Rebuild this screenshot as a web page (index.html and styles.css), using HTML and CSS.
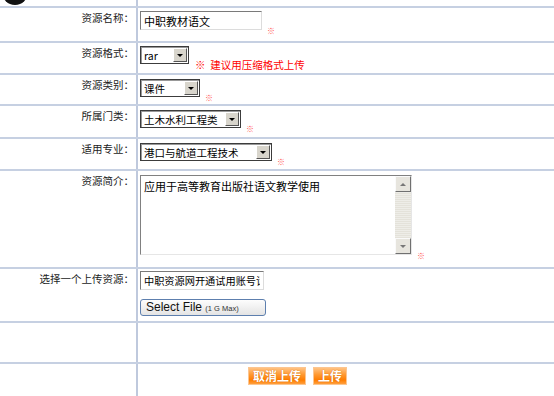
FILE: index.html
```html
<!DOCTYPE html>
<html lang="zh-CN">
<head>
  <meta charset="UTF-8">
  <title>上传资源</title>
  <link rel="stylesheet" href="styles.css">
</head>
<body>
  <div class="form">
    <div class="row row-top">
      <div class="label">
        <svg class="logo" width="40" height="6" viewBox="0 0 40 6"><ellipse cx="15" cy="-8" rx="13" ry="13" fill="#111"/></svg>
      </div>
      <div class="field"></div>
    </div>

    <div class="row row-name">
      <div class="label">资源名称：</div>
      <div class="field">
        <input class="text text-name" type="text" value="中职教材语文">
        <span class="star">※</span>
      </div>
    </div>

    <div class="row row-format">
      <div class="label">资源格式：</div>
      <div class="field">
        <span class="select w-format"><select><option>rar</option></select><span class="select-btn"></span></span>
        <span class="hint">※ &nbsp;建议用压缩格式上传</span>
      </div>
    </div>

    <div class="row row-type">
      <div class="label">资源类别：</div>
      <div class="field low">
        <span class="select w-type"><select><option>课件</option></select><span class="select-btn"></span></span>
        <span class="star">※</span>
      </div>
    </div>

    <div class="row row-cat">
      <div class="label">所属门类：</div>
      <div class="field low">
        <span class="select w-cat"><select><option>土木水利工程类</option></select><span class="select-btn"></span></span>
        <span class="star">※</span>
      </div>
    </div>

    <div class="row row-major">
      <div class="label">适用专业：</div>
      <div class="field low">
        <span class="select w-major"><select><option>港口与航道工程技术</option></select><span class="select-btn"></span></span>
        <span class="star">※</span>
      </div>
    </div>

    <div class="row row-intro">
      <div class="label">资源简介：</div>
      <div class="field low">
        <div class="textbox">
          <textarea>应用于高等教育出版社语文教学使用</textarea>
          <div class="scrollbar">
            <span class="sb-btn sb-up"></span>
            <span class="sb-track"></span>
            <span class="sb-btn sb-down"></span>
          </div>
        </div>
        <span class="star">※</span>
      </div>
    </div>

    <div class="row row-file">
      <div class="label">选择一个上传资源：</div>
      <div class="field column">
        <input class="text text-file" type="text" value="中职资源网开通试用账号请">
        <button class="select-file">Select File <small>(1 G Max)</small></button>
      </div>
    </div>

    <div class="row row-empty">
      <div class="label"></div>
      <div class="field"></div>
    </div>

    <div class="row row-actions">
      <div class="label"></div>
      <div class="field actions">
        <button class="orange-btn">取消上传</button>
        <button class="orange-btn">上传</button>
      </div>
    </div>
  </div>
</body>
</html>
```

FILE: styles.css
```css
* {
  box-sizing: border-box;
}

body {
  margin: 0;
  font-family: "Noto Sans CJK SC", "Liberation Sans", sans-serif;
  font-size: 11px;
  color: #000;
  background: #fff;
  overflow: hidden;
}

.row {
  display: grid;
  grid-template-columns: 138px 1fr;
  border-top: 2px solid #c6d0e2;
}

.row-top {
  border-top: none;
  height: 6px;
}
.row-name   { height: 35px; }
.row-format { height: 32px; }
.row-type   { height: 31px; }
.row-cat    { height: 33px; }
.row-major  { height: 32px; }
.row-intro  { height: 98px; }
.row-file   { height: 54px; }
.row-empty  { height: 41px; }
.row-actions { height: 40px; }

.label {
  border-right: 2px solid #bfc9dd;
  text-align: right;
  padding: 3px 2px 0 0;
  line-height: 13px;
  color: #222;
  font-size: 10.5px;
  overflow: hidden;
}

.row-top .label {
  text-align: left;
  padding: 0;
}

.logo {
  display: block;
}

.field {
  display: flex;
  align-items: flex-end;
  align-self: start;
  padding: 3px 0 0 2px;
}

.field.low {
  padding-top: 4px;
}

.field.column {
  flex-direction: column;
  align-items: flex-start;
  gap: 9px;
  padding-top: 2px;
}

.star {
  color: #f55;
  font-size: 8px;
  line-height: 8px;
  margin: 0 0 -5px 5px;
}

.hint {
  color: #f00;
  font-size: 10.5px;
  line-height: 12px;
  margin: 0 0 -7px 6px;
}

.text {
  font: inherit;
  height: 19px;
  padding: 0 3px;
  border: 1px solid;
  border-color: #7a7a7a #dcdcdc #dcdcdc #7a7a7a;
  background: #fff;
  color: #000;
  outline: none;
}

.text-name { width: 122px; }
.text-file { width: 124px; font-size: 10.2px; }

.select {
  display: inline-flex;
  height: 18px;
  border: 1px solid #3c3c3c;
  box-shadow: inset 1px 1px 0 #999;
  background: #fff;
}

.select select {
  appearance: none;
  -webkit-appearance: none;
  flex: 1;
  min-width: 0;
  border: none;
  background: transparent;
  font: inherit;
  font-size: 10.5px;
  color: #000;
  padding: 0 0 0 3px;
  outline: none;
}

.select-btn {
  width: 14px;
  margin: 1px 1px 1px 0;
  background: #d8d5cc;
  border: 1px solid;
  border-color: #fff #555 #555 #fff;
  display: flex;
  align-items: center;
  justify-content: center;
}

.select-btn::after,
.sb-down::after {
  content: "";
  border-left: 3px solid transparent;
  border-right: 3px solid transparent;
  border-top: 3px solid #000;
}

.w-format { width: 49px; }
.w-type   { width: 60px; }
.w-cat    { width: 101px; }
.w-major  { width: 132px; }

.textbox {
  display: flex;
  width: 272px;
  height: 80px;
  border: 1px solid;
  border-color: #808080 #e6e6e6 #e6e6e6 #808080;
}

.textbox textarea {
  flex: 1;
  border: none;
  resize: none;
  font: inherit;
  padding: 2px 3px;
  overflow: hidden;
  outline: none;
}

.scrollbar {
  width: 16px;
  display: flex;
  flex-direction: column;
  background: repeating-linear-gradient(#eeede8 0 1px, #e4e2da 1px 2px);
}

.sb-btn {
  height: 16px;
  background: #e7e5de;
  border: 1px solid;
  border-color: #fafafa #707070 #707070 #fafafa;
  display: flex;
  align-items: center;
  justify-content: center;
}

.sb-up::after {
  content: "";
  border-left: 3px solid transparent;
  border-right: 3px solid transparent;
  border-bottom: 3px solid #777;
}

.sb-down::after {
  border-top-color: #777;
}

.sb-track {
  flex: 1;
}

.select-file {
  width: 126px;
  height: 17px;
  padding: 0 0 0 5px;
  text-align: left;
  border: 1px solid #5d7fae;
  border-radius: 3px;
  background: linear-gradient(#fdfdfd, #e4e4e4);
  font-family: "Liberation Sans", Arial, sans-serif;
  font-size: 12px;
  line-height: 14px;
  color: #111;
}

.select-file small {
  font-size: 7.5px;
  color: #333;
}

.actions {
  padding: 3px 0 0 110px;
  gap: 7px;
}

.orange-btn {
  height: 18px;
  padding: 0 4px;
  border: 1px solid #fcc590;
  background: linear-gradient(#ffc283, #ff9a33 40%, #ff7d00 75%, #ff9f3e);
  color: #fff;
  font-family: "Noto Sans CJK SC", sans-serif;
  font-size: 12px;
  line-height: 14px;
  font-weight: bold;
  text-shadow: 0 0 1px #c85a00;
}
```
